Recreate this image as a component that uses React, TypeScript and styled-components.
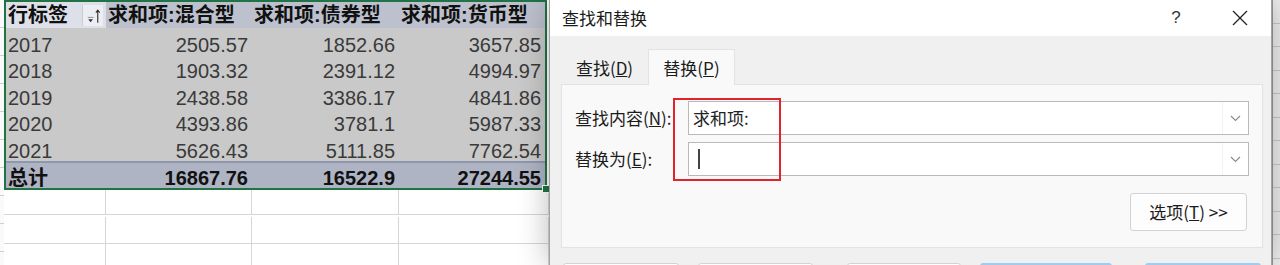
import React from 'react';
import styled, { createGlobalStyle } from 'styled-components';

const GlobalStyle = createGlobalStyle`
  html, body {
    margin: 0;
    padding: 0;
    background: #fff;
  }
  body {
    font-family: 'Noto Sans CJK SC', sans-serif;
  }
`;

interface PivotRow {
  year: string;
  mix: string;
  bond: string;
  money: string;
}

const rows: PivotRow[] = [
  { year: '2017', mix: '2505.57', bond: '1852.66', money: '3657.85' },
  { year: '2018', mix: '1903.32', bond: '2391.12', money: '4994.97' },
  { year: '2019', mix: '2438.58', bond: '3386.17', money: '4841.86' },
  { year: '2020', mix: '4393.86', bond: '3781.1', money: '5987.33' },
  { year: '2021', mix: '5626.43', bond: '5111.85', money: '7762.54' },
];

// only the top edges of the bottom buttons are in view
const bottomButtons = [
  { id: 'replaceAll', gap: 2, width: 116, primary: false },
  { id: 'replace', gap: 19, width: 115, primary: false },
  { id: 'findAll', gap: 34, width: 114, primary: false },
  { id: 'findNext', gap: 19, width: 132, primary: true },
  { id: 'close', gap: 33, width: 116, primary: true },
];

const SortIcon = () => (
  <svg width="21" height="21" viewBox="0 0 21 21">
    <line x1="5" y1="12.5" x2="11" y2="12.5" stroke="#8a8a8a" strokeWidth="1" />
    <polygon points="5.5,14.5 10.5,14.5 8,17.5" fill="#333" />
    <line x1="15.5" y1="5" x2="15.5" y2="18" stroke="#333" strokeWidth="1.2" />
    <polyline points="13.5,7.5 15.5,5 17.5,7.5" fill="none" stroke="#333" strokeWidth="1.2" />
  </svg>
);

const ChevronIcon = () => (
  <svg width="11" height="7" viewBox="0 0 11 7">
    <polyline points="1,1 5.5,5.5 10,1" fill="none" stroke="#8a8a8a" strokeWidth="1.1" />
  </svg>
);

const CloseIcon = () => (
  <svg width="16" height="16" viewBox="0 0 16 16">
    <line x1="1" y1="1" x2="15" y2="15" stroke="#222" strokeWidth="1.3" />
    <line x1="15" y1="1" x2="1" y2="15" stroke="#222" strokeWidth="1.3" />
  </svg>
);

const App: React.FC = () => {
  return (
    <Root>
      <GlobalStyle />
      <Sheet>
        <RowStrip />
        <SheetMain>
          <Pivot>
            <HeaderCell $light>
              <span>行标签</span>
              <SortButton>
                <SortIcon />
              </SortButton>
            </HeaderCell>
            <HeaderCell>求和项:混合型</HeaderCell>
            <HeaderCell>求和项:债券型</HeaderCell>
            <HeaderCell>求和项:货币型</HeaderCell>
            {rows.map((r) => (
              <React.Fragment key={r.year}>
                <DataCell>{r.year}</DataCell>
                <DataCell $num>{r.mix}</DataCell>
                <DataCell $num>{r.bond}</DataCell>
                <DataCell $num>{r.money}</DataCell>
              </React.Fragment>
            ))}
            <TotalCell>总计</TotalCell>
            <TotalCell $num>16867.76</TotalCell>
            <TotalCell $num>16522.9</TotalCell>
            <TotalCell $num>27244.55</TotalCell>
            <FillHandle />
          </Pivot>
          <EmptyGrid>
            {Array.from({ length: 12 }).map((_, i) => (
              <EmptyCell key={i} $first={i < 4} />
            ))}
          </EmptyGrid>
        </SheetMain>
      </Sheet>

      <Dialog>
        <TitleBar>
          <Title>查找和替换</Title>
          <HelpButton>?</HelpButton>
          <CloseButton>
            <CloseIcon />
          </CloseButton>
        </TitleBar>
        <DialogBody>
          <Tabs>
            <Tab>
              查找(<u>D</u>)
            </Tab>
            <Tab $active>
              替换(<u>P</u>)
            </Tab>
          </Tabs>
          <Panel>
            <FieldRow>
              <FieldLabel>
                查找内容(<u>N</u>):
              </FieldLabel>
              <ComboBox>
                <ComboText>求和项:</ComboText>
                <ComboArrow>
                  <ChevronIcon />
                </ComboArrow>
              </ComboBox>
            </FieldRow>
            <FieldRow $gapTop>
              <FieldLabel>
                替换为(<u>E</u>):
              </FieldLabel>
              <ComboBox>
                <ComboText>
                  <Caret />
                </ComboText>
                <ComboArrow>
                  <ChevronIcon />
                </ComboArrow>
              </ComboBox>
            </FieldRow>
            <OptionsRow>
              <OptionsButton>
                选项(<u>T</u>) &gt;&gt;
              </OptionsButton>
            </OptionsRow>
            <Highlight />
          </Panel>
          <ButtonRow>
            {bottomButtons.map((b) => (
              <DialogButton key={b.id} $gap={b.gap} $width={b.width} $primary={b.primary} />
            ))}
          </ButtonRow>
        </DialogBody>
      </Dialog>

      <RightStrip />
    </Root>
  );
};

export default App;

const Root = styled.div`
  display: flex;
  width: 1280px;
  height: 265px;
  overflow: hidden;
  background: #fff;
`;

const Sheet = styled.div`
  display: flex;
  width: 549px;
  flex: none;
  background: #fff;
`;

const RowStrip = styled.div`
  width: 4px;
  flex: none;
  background: repeating-linear-gradient(
    to bottom,
    #fafafa 0,
    #fafafa 27px,
    #cfcfcf 27px,
    #cfcfcf 28px
  );
`;

const SheetMain = styled.div`
  display: flex;
  flex-direction: column;
  flex: 1;
`;

const Pivot = styled.div`
  position: relative;
  display: grid;
  grid-template-columns: 100px 146px 147px 146px;
  grid-template-rows: 26px repeat(5, 26.6px) 27px;
  width: 543px;
  box-sizing: border-box;
  border: 2px solid #217346;
  font-family: 'Liberation Sans', 'Noto Sans CJK SC', sans-serif;
  font-size: 20px;
`;

const HeaderCell = styled.div<{ $light?: boolean }>`
  display: flex;
  align-items: center;
  justify-content: space-between;
  padding: 0 3px 0 2px;
  background: ${(p) => (p.$light ? '#dde0e8' : '#bdc1cd')};
  font-weight: bold;
  color: #111;
  line-height: 22px;
  white-space: nowrap;
`;

const SortButton = styled.div`
  display: flex;
  width: 21px;
  height: 21px;
  background: #eceef3;
  border-left: 1px solid #c9ccd4;
  box-sizing: border-box;
`;

const DataCell = styled.div<{ $num?: boolean }>`
  display: flex;
  align-items: flex-end;
  justify-content: ${(p) => (p.$num ? 'flex-end' : 'flex-start')};
  padding: 0 ${(p) => (p.$num ? '4px' : '0')} 0 ${(p) => (p.$num ? '0' : '2px')};
  background: #c9c9c9;
  color: #3a3a3a;
  line-height: 20px;
`;

const TotalCell = styled(DataCell)`
  background: #aeb4c4;
  border-top: 2px solid #8e97ad;
  box-sizing: border-box;
  font-weight: bold;
  color: #111;
`;

const FillHandle = styled.div`
  position: absolute;
  right: -5px;
  bottom: -5px;
  width: 6px;
  height: 6px;
  background: #217346;
  border: 1px solid #fff;
`;

const EmptyGrid = styled.div`
  display: grid;
  grid-template-columns: 102px 146px 147px 1fr;
  grid-auto-rows: 27px;
`;

const EmptyCell = styled.div<{ $first?: boolean }>`
  height: ${(p) => (p.$first ? '25px' : '27px')};
  border-right: 1px solid #d6d6d6;
  border-bottom: 1px solid #d6d6d6;
  box-sizing: border-box;
`;

const Dialog = styled.div`
  position: relative;
  z-index: 1;
  display: flex;
  flex-direction: column;
  width: 723px;
  flex: none;
  box-sizing: border-box;
  background: #f0f0f0;
  border-left: 1px solid #a3a3a3;
  border-right: 1px solid #a3a3a3;
  box-shadow: 0 0 30px rgba(0, 0, 0, 0.28);
  font-family: 'Noto Sans CJK SC', sans-serif;
  font-size: 17px;
  color: #1b1b1b;
`;

const TitleBar = styled.div`
  display: flex;
  align-items: center;
  height: 36px;
  padding: 0 8px 0 12px;
  background: #fff;
  flex: none;
`;

const Title = styled.div`
  flex: 1;
  line-height: 20px;
`;

const HelpButton = styled.div`
  width: 46px;
  margin-right: 18px;
  text-align: center;
  font-family: 'Liberation Sans', sans-serif;
  font-size: 17px;
  color: #333;
`;

const CloseButton = styled.div`
  display: flex;
  align-items: center;
  justify-content: center;
  width: 46px;
  height: 36px;
`;

const DialogBody = styled.div`
  display: flex;
  flex-direction: column;
  padding: 13px 8px 0 11px;
`;

const Tabs = styled.div`
  display: flex;
  height: 36px;
  margin-bottom: -1px;
  position: relative;
  z-index: 1;
`;

const Tab = styled.div<{ $active?: boolean }>`
  display: flex;
  align-items: center;
  justify-content: center;
  width: 87px;
  box-sizing: border-box;
  line-height: 20px;
  background: ${(p) => (p.$active ? '#f9f9f9' : 'transparent')};
  border: 1px solid ${(p) => (p.$active ? '#e3e3e3' : 'transparent')};
  border-bottom: none;
`;

const Panel = styled.div`
  position: relative;
  height: 164px;
  box-sizing: border-box;
  padding: 16px 13px 0 13px;
  background: #f9f9f9;
  border: 1px solid #e3e3e3;
`;

const FieldRow = styled.div<{ $gapTop?: boolean }>`
  display: grid;
  grid-template-columns: 113px 1fr;
  align-items: center;
  height: 34px;
  margin-top: ${(p) => (p.$gapTop ? '7px' : '0')};
`;

const FieldLabel = styled.div`
  line-height: 20px;
  white-space: nowrap;
`;

const ComboBox = styled.div`
  display: flex;
  height: 34px;
  box-sizing: border-box;
  background: #fff;
  border: 1px solid #b9b9b9;
`;

const ComboText = styled.div`
  display: flex;
  align-items: center;
  flex: 1;
  padding-left: 4px;
  line-height: 20px;
  color: #222;
`;

const Caret = styled.div`
  width: 1.5px;
  height: 20px;
  margin-left: 5px;
  background: #444;
`;

const ComboArrow = styled.div`
  display: flex;
  align-items: center;
  justify-content: center;
  width: 25px;
  border-left: 1px solid #f3f3f3;
`;

const OptionsRow = styled.div`
  display: flex;
  justify-content: flex-end;
  margin-top: 17px;
  padding-right: 2px;
`;

const OptionsButton = styled.div`
  display: flex;
  align-items: center;
  justify-content: center;
  width: 117px;
  height: 38px;
  box-sizing: border-box;
  background: #fdfdfd;
  border: 1px solid #d3d3d3;
  border-radius: 3px;
  line-height: 20px;
`;

const Highlight = styled.div`
  position: absolute;
  left: 111px;
  top: 13px;
  width: 108px;
  height: 83px;
  box-sizing: border-box;
  border: 2px solid #e2232d;
`;

const ButtonRow = styled.div`
  display: flex;
  margin-top: 15px;
`;

const DialogButton = styled.div<{ $gap: number; $width: number; $primary?: boolean }>`
  flex: none;
  width: ${(p) => p.$width}px;
  height: 36px;
  margin-left: ${(p) => p.$gap}px;
  box-sizing: border-box;
  background: #fdfdfd;
  border: ${(p) => (p.$primary ? '2px solid #9fcdf0' : '1px solid #d3d3d3')};
  border-radius: 3px;
`;

const RightStrip = styled.div`
  flex: 1;
  border-left: 1px solid #9a9a9a;
  background: repeating-linear-gradient(
    to bottom,
    #eeeeee 0,
    #eeeeee 22.5px,
    #c9c9c9 22.5px,
    #c9c9c9 23.5px
  );
`;
